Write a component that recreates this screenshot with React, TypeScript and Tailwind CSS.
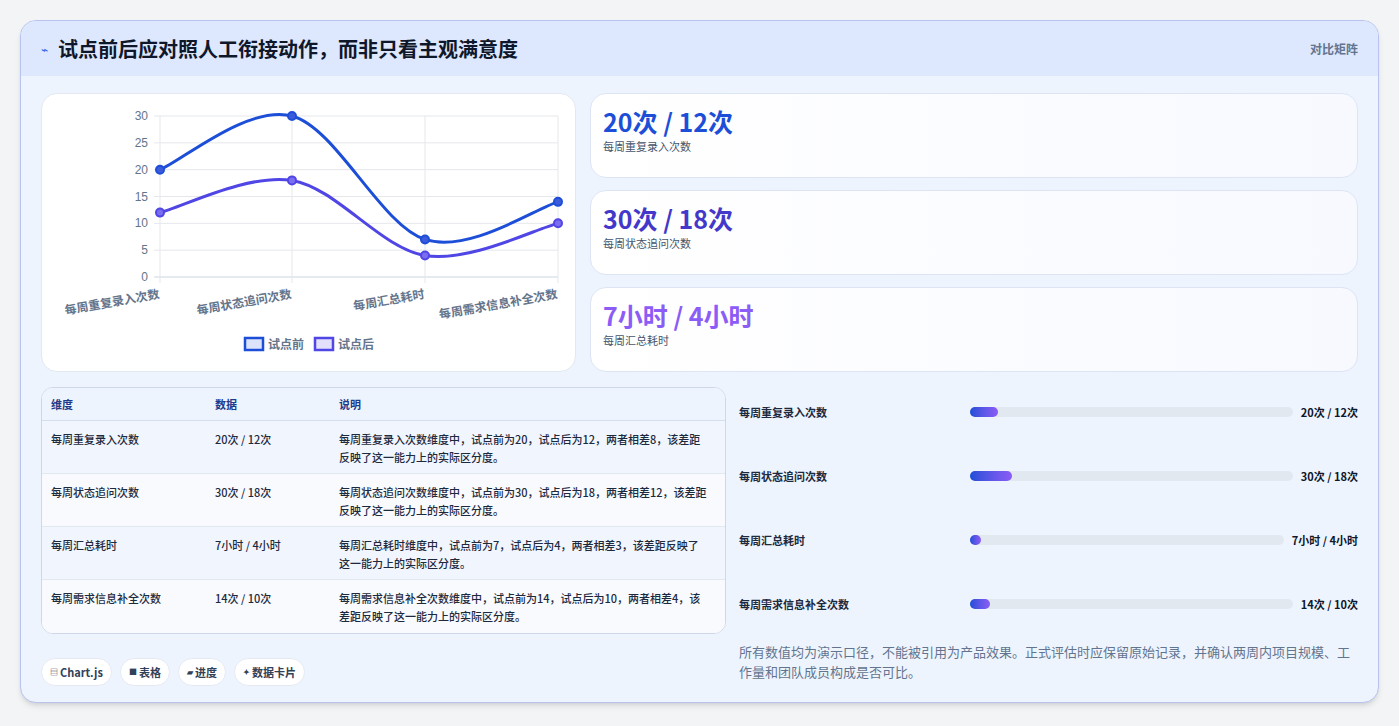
const F = { fontFamily: '"Noto Sans CJK SC", "Noto Sans", sans-serif' };

const LABELS = ["每周重复录入次数", "每周状态追问次数", "每周汇总耗时", "每周需求信息补全次数"];
const BEFORE = [20, 30, 7, 14];
const AFTER = [12, 18, 4, 10];
const XS = [118, 250, 383, 516];
const yOf = (v: number) => 183 - (v * 161) / 30;

function curve(vals: number[]) {
  const p = vals.map((v, i) => [XS[i], yOf(v)]);
  let d = `M${p[0][0]},${p[0][1]}`;
  for (let i = 0; i < p.length - 1; i++) {
    const p0 = p[i - 1] || p[i];
    const p1 = p[i];
    const p2 = p[i + 1];
    const p3 = p[i + 2] || p2;
    const t = 0.4 / 1.2;
    const c1 = [p1[0] + (p2[0] - p0[0]) * t * 0.5, p1[1] + (p2[1] - p0[1]) * t * 0.5];
    const c2 = [p2[0] - (p3[0] - p1[0]) * t * 0.5, p2[1] - (p3[1] - p1[1]) * t * 0.5];
    d += ` C${c1[0]},${c1[1]} ${c2[0]},${c2[1]} ${p2[0]},${p2[1]}`;
  }
  return d;
}

function Chart() {
  return (
    <svg width="535" height="279" className="block">
      {[0, 5, 10, 15, 20, 25, 30].map((v) => (
        <g key={v}>
          <line x1="112" x2="516" y1={yOf(v)} y2={yOf(v)} stroke={v === 0 ? "#cbd5e1" : "#e5e7eb"} />
          <text x="106" y={yOf(v) + 4} textAnchor="end" fontSize="12" fill="#64748b" fontFamily="Liberation Sans, sans-serif">
            {v}
          </text>
        </g>
      ))}
      {XS.map((x) => (
        <line key={x} x1={x} x2={x} y1="22" y2="189" stroke="#e5e7eb" />
      ))}
      {LABELS.map((l, i) => (
        <text
          key={l}
          x={XS[i]}
          y="204"
          textAnchor="end"
          fontSize="12"
          fontWeight="600"
          fill="#64748b"
          style={F}
          transform={`rotate(-10 ${XS[i]} 204)`}
        >
          {l}
        </text>
      ))}
      <path d={curve(BEFORE)} fill="none" stroke="#1d4ed8" strokeWidth="3" />
      <path d={curve(AFTER)} fill="none" stroke="#4f46e5" strokeWidth="3" />
      {BEFORE.map((v, i) => (
        <circle key={"b" + i} cx={XS[i]} cy={yOf(v)} r="4" fill="#3b5bdb" stroke="#1d4ed8" strokeWidth="2" />
      ))}
      {AFTER.map((v, i) => (
        <circle key={"a" + i} cx={XS[i]} cy={yOf(v)} r="4" fill="#7c6cf0" stroke="#4f46e5" strokeWidth="2" />
      ))}
      <rect x="203" y="244" width="18" height="12" fill="#dbe4fb" stroke="#1d4ed8" strokeWidth="2.5" />
      <text x="226" y="255" fontSize="12" fontWeight="600" fill="#64748b" style={F}>试点前</text>
      <rect x="273" y="244" width="18" height="12" fill="#e3e0fb" stroke="#4f46e5" strokeWidth="2.5" />
      <text x="296" y="255" fontSize="12" fontWeight="600" fill="#64748b" style={F}>试点后</text>
    </svg>
  );
}

const STATS = [
  { v: "20次 / 12次", l: "每周重复录入次数", c: "text-[#1d4ed8]" },
  { v: "30次 / 18次", l: "每周状态追问次数", c: "text-[#4338ca]" },
  { v: "7小时 / 4小时", l: "每周汇总耗时", c: "text-[#8b5cf6]" },
];

const ROWS = [
  ["每周重复录入次数", "20次 / 12次", "每周重复录入次数维度中，试点前为20，试点后为12，两者相差8，该差距反映了这一能力上的实际区分度。"],
  ["每周状态追问次数", "30次 / 18次", "每周状态追问次数维度中，试点前为30，试点后为18，两者相差12，该差距反映了这一能力上的实际区分度。"],
  ["每周汇总耗时", "7小时 / 4小时", "每周汇总耗时维度中，试点前为7，试点后为4，两者相差3，该差距反映了这一能力上的实际区分度。"],
  ["每周需求信息补全次数", "14次 / 10次", "每周需求信息补全次数维度中，试点前为14，试点后为10，两者相差4，该差距反映了这一能力上的实际区分度。"],
];

const BARS = [
  { l: "每周重复录入次数", v: "20次 / 12次", w: 28 },
  { l: "每周状态追问次数", v: "30次 / 18次", w: 42 },
  { l: "每周汇总耗时", v: "7小时 / 4小时", w: 11 },
  { l: "每周需求信息补全次数", v: "14次 / 10次", w: 20 },
];

export default function App() {
  return (
    <div className="min-h-screen bg-[#f3f4f6] px-5 pt-5 pb-4" style={F}>
      <div className="overflow-hidden rounded-2xl border border-[#b9c3f0] bg-[#eef4fe] shadow-md">
        <div className="flex h-[55px] items-center justify-between bg-[#dde7fd] px-5">
          <div className="flex items-center gap-2.5">
            <span className="text-xs text-[#2563eb]">⌁</span>
            <h1 className="text-[20px] font-bold text-[#0f172a]">试点前后应对照人工衔接动作，而非只看主观满意度</h1>
          </div>
          <span className="text-xs font-semibold text-slate-500">对比矩阵</span>
        </div>
        <div className="flex flex-col gap-[15px] px-5 pt-[17px] pb-[16px]">
          <div className="flex gap-[14px]">
            <div className="h-[279px] w-[535px] shrink-0 rounded-2xl border border-[#e2e8f0] bg-white">
              <Chart />
            </div>
            <div className="flex flex-1 flex-col gap-[12px]">
              {STATS.map((s) => (
                <div key={s.l} className="flex h-[85px] flex-col rounded-2xl border border-[#dde5f5] bg-gradient-to-r from-white to-[#f7f9ff] px-3 pt-2.5">
                  <div className={`text-[25px] font-bold leading-[34px] ${s.c}`}>{s.v}</div>
                  <div className="text-[11px] text-slate-600">{s.l}</div>
                </div>
              ))}
            </div>
          </div>
          <div className="flex gap-[13px]">
            <div className="flex w-[685px] shrink-0 flex-col gap-6">
              <div className="overflow-hidden rounded-xl border border-[#cfd8ea] bg-white">
                <div className="flex h-[33px] items-center border-b border-[#d6deee] bg-[#eef4fe] px-[9px] text-[11px] font-semibold text-[#1e3a8a]">
                  <div className="w-[164px]">维度</div>
                  <div className="w-[124px]">数据</div>
                  <div>说明</div>
                </div>
                {ROWS.map((r, i) => (
                  <div key={r[0]} className={`flex h-[53px] border-b border-[#e2e8f0] px-[9px] pt-[9px] text-[11px] font-medium leading-[18px] text-slate-800 last:border-b-0 ${i % 2 === 0 ? "bg-[#f1f6fe]" : "bg-[#f8fafd]"}`}>
                    <div className="w-[164px] shrink-0">{r[0]}</div>
                    <div className="w-[124px] shrink-0">{r[1]}</div>
                    <div className="flex-1 pr-2">{r[2]}</div>
                  </div>
                ))}
              </div>
              <div className="flex gap-2">
                {[["▤", "Chart.js"], ["■", "表格"], ["▰", "进度"], ["✦", "数据卡片"]].map(([ic, t]) => (
                  <span key={t} className="flex h-[28px] items-center gap-0.5 rounded-full border border-[#e5e9f2] bg-white px-2 text-[11px] font-bold text-slate-700">
                    <span className="text-[8px]">{ic}</span>
                    {t}
                  </span>
                ))}
              </div>
            </div>
            <div className="-mt-[7px] flex flex-1 flex-col">
              {BARS.map((b) => (
                <div key={b.l} className="flex h-[64px] items-center gap-2">
                  <div className="w-[223px] shrink-0 text-[11px] font-semibold text-slate-800">{b.l}</div>
                  <div className="h-[10px] flex-1 rounded-full bg-[#e2e8f0]">
                    <div className="h-full rounded-full bg-gradient-to-r from-[#1d4ed8] to-[#8b5cf6]" style={{ width: b.w }} />
                  </div>
                  <div className="shrink-0 text-[11px] font-bold text-slate-900">{b.v}</div>
                </div>
              ))}
              <p className="mt-[6px] text-[13px] leading-[20px] text-slate-500">
                所有数值均为演示口径，不能被引用为产品效果。正式评估时应保留原始记录，并确认两周内项目规模、工作量和团队成员构成是否可比。
              </p>
            </div>
          </div>
        </div>
      </div>
    </div>
  );
}
